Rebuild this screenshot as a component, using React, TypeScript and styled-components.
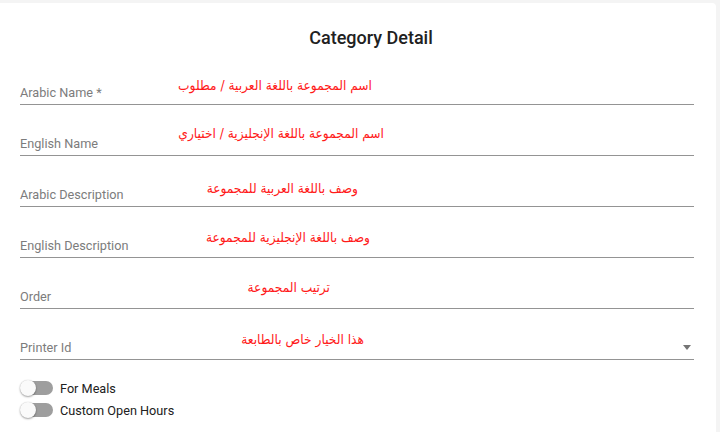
import React from "react";
import styled, { createGlobalStyle } from "styled-components";

const GlobalStyle = createGlobalStyle`
  html, body {
    margin: 0;
    padding: 0;
    background: #f4f4f4;
    font-family: Roboto, "Liberation Sans", sans-serif;
  }
`;

type FieldDef = {
  label: string;
  note: string;
  noteRight: number;
  noteTop: number;
  select?: boolean;
};

const fields: FieldDef[] = [
  { label: "Arabic Name *", note: "اسم المجموعة باللغة العربية / مطلوب", noteRight: 322, noteTop: 22 },
  { label: "English Name", note: "اسم المجموعة باللغة الإنجليزية / اختياري", noteRight: 310, noteTop: 19 },
  { label: "Arabic Description", note: "وصف باللغة العربية للمجموعة", noteRight: 336, noteTop: 23 },
  { label: "English Description", note: "وصف باللغة الإنجليزية للمجموعة", noteRight: 324, noteTop: 21 },
  { label: "Order", note: "ترتيب المجموعة", noteRight: 364, noteTop: 20 },
  { label: "Printer Id", note: "هذا الخيار خاص بالطابعة", noteRight: 330, noteTop: 21, select: true },
];

const toggles = ["For Meals", "Custom Open Hours"];

const Page = styled.div`
  padding: 3px 4px 0 0;
  min-height: 429px;
`;

const Card = styled.div`
  background: #fff;
  border-radius: 0 4px 0 0;
  padding: 0 22px 20px 20px;
  min-height: 409px;
`;

const Title = styled.h2`
  margin: 0;
  height: 51px;
  padding: 24px 0 0 28px;
  box-sizing: border-box;
  text-align: center;
  font-size: 18px;
  font-weight: 500;
  line-height: 22px;
  color: #212121;
`;

const Field = styled.div`
  position: relative;
  height: 50px;
  display: flex;
  align-items: flex-end;
  border-bottom: 1px solid #949494;
`;

const Label = styled.span`
  flex: 1;
  font-size: 12.7px;
  line-height: 16px;
  padding-bottom: 3px;
  color: #7c7c7c;
`;

const Arrow = styled.svg`
  width: 8px;
  height: 5px;
  margin: 0 3px 9px 0;
  fill: #757575;
`;

const Note = styled.span<{ $right: number; $top: number }>`
  position: absolute;
  right: ${(p) => p.$right}px;
  top: ${(p) => p.$top}px;
  direction: rtl;
  white-space: nowrap;
  font-family: "DejaVu Sans Condensed", "DejaVu Sans", sans-serif;
  font-stretch: condensed;
  font-size: 13.6px;
  line-height: 18px;
  color: #ff1a1a;
`;

const Toggles = styled.div`
  padding-top: 17px;
  display: flex;
  flex-direction: column;
`;

const ToggleRow = styled.label`
  display: flex;
  align-items: center;
  height: 22px;
  gap: 7px;
  font-size: 12.7px;
  color: #212121;
`;

const Switch = styled.span`
  position: relative;
  width: 33px;
  height: 16px;
  display: flex;
  align-items: center;
  justify-content: flex-end;
`;

const Track = styled.span`
  width: 26px;
  height: 14px;
  border-radius: 7px;
  background: #9e9e9e;
`;

const Thumb = styled.span`
  position: absolute;
  left: 0;
  top: 0;
  width: 16px;
  height: 16px;
  border-radius: 50%;
  background: #fafafa;
  box-shadow: 0 1px 2px rgba(0, 0, 0, 0.35), 0 0 1px rgba(0, 0, 0, 0.2);
`;

export default function App() {
  return (
    <Page>
      <GlobalStyle />
      <Card>
        <Title>Category Detail</Title>
        {fields.map((f) => (
          <Field key={f.label}>
            <Label>{f.label}</Label>
            {f.select && (
              <Arrow viewBox="0 0 8 5">
                <path d="M0 0h8L4 5z" />
              </Arrow>
            )}
            <Note $right={f.noteRight} $top={f.noteTop}>
              {f.note}
            </Note>
          </Field>
        ))}
        <Toggles>
          {toggles.map((t) => (
            <ToggleRow key={t}>
              <Switch>
                <Track />
                <Thumb />
              </Switch>
              {t}
            </ToggleRow>
          ))}
        </Toggles>
      </Card>
    </Page>
  );
}
